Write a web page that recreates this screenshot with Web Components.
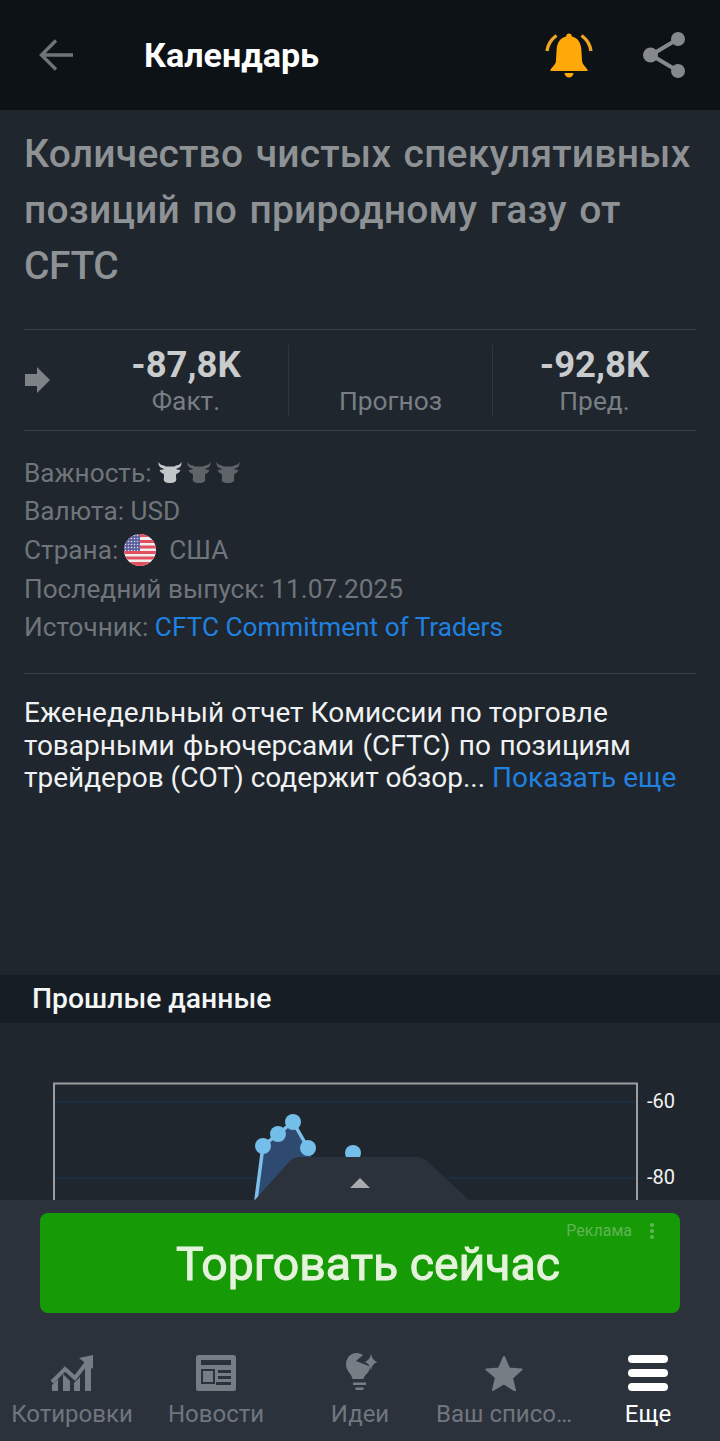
<!DOCTYPE html>
<html lang="ru">
<head>
<meta charset="utf-8">
<title>Календарь</title>
<style>
  html, body { margin: 0; padding: 0; background: #1f262d; }
  body { font-family: Roboto, "Liberation Sans", sans-serif; width: 720px; height: 1441px; overflow: hidden; }
</style>
</head>
<body>
<app-shell>
  <top-bar title="Календарь"></top-bar>
  <event-summary></event-summary>
  <event-stats></event-stats>
  <event-details></event-details>
  <event-about></event-about>
  <section-head>Прошлые данные</section-head>
  <history-chart></history-chart>
  <bottom-dock slot="dock"></bottom-dock>
</app-shell>

<script>
// small helper so each component stays short
function shadow(el, html) {
  el.attachShadow({ mode: 'open' }).innerHTML = html;
}

class AppShell extends HTMLElement {
  constructor() {
    super();
    shadow(this, `
      <style>
        :host { display: flex; flex-direction: column; height: 1441px; position: relative; }
        .scroll { height: 1200px; overflow: hidden; flex: none; }
      </style>
      <div class="scroll"><slot></slot></div>
      <slot name="dock"></slot>
    `);
  }
}

class TopBar extends HTMLElement {
  constructor() {
    super();
    shadow(this, `
      <style>
        :host { display: flex; align-items: center; height: 110px; background: #0d1216; }
        .back { width: 144px; padding-left: 38px; box-sizing: border-box; display: flex; }
        h1 { flex: 1; margin: 0; font: 700 34.100px/40px Roboto, sans-serif; color: #fff; }
        .bell { display: flex; margin-right: 50px; }
        .share { display: flex; margin-right: 33px; }
      </style>
      <div class="back">
        <svg width="36" height="36" viewBox="0 0 36 36" fill="none" stroke="#6f7478" stroke-width="3.400">
          <path d="M35 18H5M18 3.500 3.500 18 18 32.500"/>
        </svg>
      </div>
      <h1>${this.getAttribute('title')}</h1>
      <div class="bell">
        <svg width="48" height="48" viewBox="0 0 48 48">
          <path fill="#ffa80a" d="M24 2.500c1.700 0 2.800 1.200 2.900 3 6.300 1.500 9.100 6.600 9.500 13.500l.7 11.500c.2 2.500 3 4.600 5.300 8 .6.900.2 1.500-.8 1.500H6.400c-1 0-1.400-.6-.8-1.500 2.300-3.400 5.100-5.500 5.300-8l.7-11.500c.4-6.900 3.200-12 9.500-13.500.1-1.800 1.200-3 2.900-3z"/>
          <path fill="#ffa80a" d="M19.500 42h9c-.3 2.800-2.100 4.500-4.500 4.500s-4.200-1.700-4.500-4.500z"/>
          <path fill="none" stroke="#f0a526" stroke-width="3.400" d="M11.500 4.500C6 8.500 2.800 14 2 20M36.500 4.500C42 8.500 45.200 14 46 20"/>
        </svg>
      </div>
      <div class="share">
        <svg width="44" height="48" viewBox="0 0 44 48">
          <path fill="none" stroke="#85898d" stroke-width="4" d="M35 8 8 24l27 16"/>
          <circle cx="35" cy="8" r="7" fill="#85898d"/>
          <circle cx="7.500" cy="24" r="7.500" fill="#85898d"/>
          <circle cx="35" cy="40" r="7" fill="#85898d"/>
        </svg>
      </div>
    `);
  }
}

class EventSummary extends HTMLElement {
  constructor() {
    super();
    shadow(this, `
      <style>
        :host { display: block; padding: 16px 24px 35px; }
        h2 { margin: 0; font: 500 39px/56px Roboto, sans-serif; color: #8e9295; white-space: nowrap; letter-spacing: .19px; word-spacing: 2.500px; }
        span { letter-spacing: -.4px; }
      </style>
      <h2>Количество чистых спекулятивных<br>позиций по природному газу от<br><span>CFTC</span></h2>
    `);
  }
}

class StatCell extends HTMLElement {
  constructor() {
    super();
    shadow(this, `
      <style>
        :host { display: flex; flex-direction: column; align-items: center; justify-content: flex-end; box-sizing: border-box; height: 71px; }
        b { font: 700 36.500px/38px Roboto, sans-serif; color: #c9cbcd; }
        span { font: 400 26.300px/32px Roboto, sans-serif; color: #787e84; position: relative; top: 1px; }
      </style>
      <b>${this.getAttribute('value') || ''}</b>
      <span>${this.getAttribute('label')}</span>
    `);
  }
}

class EventStats extends HTMLElement {
  constructor() {
    super();
    shadow(this, `
      <style>
        :host { display: grid; grid-template-columns: 265px 204px 203px; align-items: center; margin: 0 24px; height: 102px; box-sizing: border-box; border-top: 1px solid #3b4248; border-bottom: 1px solid #3b4248; }
        .first { display: grid; grid-template-columns: 60px 1fr; align-items: center; border-right: 1px solid #2f363d; }
        .first svg { display: block; }
        .mid { border-right: 1px solid #2f363d; }
      </style>
      <div class="first">
        <svg width="28" height="30" viewBox="0 0 28 28"><path fill="#7e8388" d="M1 8h12V1l13 13-13 13v-7H1z"/></svg>
        <stat-cell value="-87,8K" label="Факт."></stat-cell>
      </div>
      <stat-cell class="mid" label="Прогноз"></stat-cell>
      <stat-cell value="-92,8K" label="Пред."></stat-cell>
    `);
  }
}

class BullIcon extends HTMLElement {
  constructor() {
    super();
    const fill = this.hasAttribute('on') ? '#c4c7ca' : '#5f6468';
    shadow(this, `
      <style>:host { display: inline-flex; }</style>
      <svg width="24" height="21" viewBox="0 0 24 21" fill="${fill}">
        <path d="M.5 0c-.5 3 1 5.500 4 6.300l2.500.7h10l2.500-.7c3-.8 4.500-3.300 4-6.300-1 2-2.500 3-4.500 3.300-1 .2-2 .7-2.700 1.200H7.700C7 4 6 3.500 5 3.300 3 3 1.500 2 .5 0z"/>
        <path d="M1.500 8c1.500-.5 3.500-.7 5-.5l.5 4.500c-2.500 0-4.500-1.500-5.500-4zM22.500 8c-1.500-.5-3.500-.7-5-.5l-.5 4.500c2.500 0 4.500-1.500 5.500-4z"/>
        <path d="M5.500 5.500h13L18 15l.3 2.500c0 2-2 3.500-6.300 3.500s-6.300-1.500-6.300-3.500L6 15z"/>
      </svg>
    `);
  }
}

class FlagUs extends HTMLElement {
  constructor() {
    super();
    shadow(this, `
      <style>:host { display: inline-flex; }</style>
      <svg width="32" height="32" viewBox="0 0 32 32">
        <defs><clipPath id="c"><circle cx="16" cy="16" r="16"/></clipPath>
        <pattern id="d" width="3" height="3" patternUnits="userSpaceOnUse"><rect width="3" height="3" fill="#5a5f9c"/><circle cx="1.500" cy="1.500" r=".8" fill="#d5d8ea"/></pattern></defs>
        <g clip-path="url(#c)">
          <rect width="32" height="32" fill="#f1eef0"/>
          <path fill="#e0505f" d="M0 0h32v3H0zM0 6h32v3H0zM0 11.500h32v3H0zM0 17h32v3H0zM0 22.500h32v3H0zM0 28h32v4H0z"/>
          <rect width="16" height="17" fill="url(#d)"/>
        </g>
      </svg>
    `);
  }
}

class EventDetails extends HTMLElement {
  constructor() {
    super();
    shadow(this, `
      <style>
        :host { display: block; margin: 0 24px; padding: 22.500px 0 26.500px; border-bottom: 1px solid #3b4248; font: 400 26.200px/38.700px Roboto, sans-serif; color: #6f757b; }
        div { display: flex; align-items: center; height: 38.700px; white-space: pre; }
        a { color: #1f81e0; text-decoration: none; }
        bull-icon { margin-right: 5px; }
        bull-icon:first-of-type { margin-left: 6px; }
        flag-us { margin: 0 13px 0 6px; }
      </style>
      <div>Важность:<bull-icon on></bull-icon><bull-icon></bull-icon><bull-icon></bull-icon></div>
      <div>Валюта: USD</div>
      <div>Страна:<flag-us></flag-us>США</div>
      <div>Последний выпуск: 11.07.2025</div>
      <div>Источник: <a href="#">CFTC Commitment of Traders</a></div>
    `);
  }
}

class EventAbout extends HTMLElement {
  constructor() {
    super();
    shadow(this, `
      <style>
        :host { display: block; box-sizing: border-box; height: 301px; padding: 23px 24px 0; font: 400 28px/32.500px Roboto, sans-serif; color: #f0f1f2; white-space: nowrap; }
        a { color: #1f81e0; text-decoration: none; }
        .wide { word-spacing: 1.500px; }
      </style>
      Еженедельный отчет Комиссии по торговле<br>
      <span class="wide">товарными фьючерсами (CFTC) по позициям</span><br>
      трейдеров (COT) содержит обзор... <a href="#">Показать еще</a>
    `);
  }
}

class SectionHead extends HTMLElement {
  constructor() {
    super();
    shadow(this, `
      <style>
        :host { display: flex; align-items: center; height: 48px; padding-left: 32px; background: #161d24; font: 500 28.300px/32px Roboto, sans-serif; color: #f4f5f5; }
      </style>
      <slot></slot>
    `);
  }
}

class HistoryChart extends HTMLElement {
  constructor() {
    super();
    shadow(this, `
      <style>
        :host { display: block; height: 180px; }
        svg { display: block; }
        text { font: 400 20px Roboto, sans-serif; fill: #f2f2f2; }
      </style>
      <svg width="720" height="180" viewBox="0 1023 720 180">
        <path fill="none" stroke="#9b9e9f" stroke-width="2" d="M54 1203V1083.500h583V1203"/>
        <path stroke="#1b3347" stroke-width="1.500" d="M55 1102h581M55 1178h581"/>
        <text x="647" y="1108">-60</text>
        <text x="647" y="1184">-80</text>
        <path fill="#2f4a70" d="M256 1200 263 1146l15-12 15-12 15 26 20 52z"/>
        <path fill="none" stroke="#7cc0e9" stroke-width="3.500" d="M256 1200 263 1146l15-12 15-12 15 26"/>
        <g fill="#74bfe9">
          <circle cx="263" cy="1146" r="8"/>
          <circle cx="278" cy="1134" r="8"/>
          <circle cx="293" cy="1122" r="8"/>
          <circle cx="308" cy="1148" r="8"/>
          <circle cx="353" cy="1153" r="8"/>
        </g>
      </svg>
    `);
  }
}

class DockTab extends HTMLElement {
  constructor() {
    super();
    const on = this.hasAttribute('active');
    shadow(this, `
      <style>
        :host { display: flex; flex-direction: column; align-items: center; width: 144px; color: ${on ? '#fff' : '#6f767e'}; }
        .icon { height: 38px; display: flex; align-items: flex-end; justify-content: center; }
        span { margin-top: 7px; font: 400 24px/32px Roboto, sans-serif; white-space: nowrap; }
      </style>
      <div class="icon"><slot></slot></div>
      <span>${this.getAttribute('label')}</span>
    `);
  }
}

class AdBanner extends HTMLElement {
  constructor() {
    super();
    shadow(this, `
      <style>
        :host { display: flex; align-items: center; justify-content: center; position: relative; height: 100px; margin: 0 40px; border-radius: 8px; background: #169a06; }
        b { font: 400 46.400px/52px Roboto, sans-serif; color: #e5f3dc; filter: blur(.6px); -webkit-text-stroke: 1px #e5f3dc; padding: 2px 0 0 16px; }
        .tag { position: absolute; top: 8px; right: 48px; font: 400 16px/20px Roboto, sans-serif; color: #5fb454; }
        svg { position: absolute; top: 9px; right: 24px; }
      </style>
      <b>Торговать сейчас</b>
      <span class="tag">Реклама</span>
      <svg width="8" height="18" viewBox="0 0 8 18"><g fill="#62b557"><circle cx="4" cy="3" r="2"/><circle cx="4" cy="9" r="2"/><circle cx="4" cy="15" r="2"/></g></svg>
    `);
  }
}

class BottomDock extends HTMLElement {
  constructor() {
    super();
    shadow(this, `
      <style>
        :host { display: block; position: relative; height: 241px; box-sizing: border-box; padding-top: 13px; background: #2b323c; }
        .handle { position: absolute; left: 254px; top: -43px; }
        nav { display: flex; margin-top: 40px; }
      </style>
      <svg class="handle" width="216" height="44" viewBox="0 0 216 44">
        <path fill="#2b323c" d="M0 44 34 6c3-4 7-6 12-6h116c5 0 8 1 11 4l43 40z"/>
        <path fill="#a9acaf" d="M106 21l10 10H96z"/>
      </svg>
      <ad-banner></ad-banner>
      <nav>
        <dock-tab label="Котировки">
          <svg width="44" height="36" viewBox="0 0 44 36" fill="#777d85">
            <path d="M2 36v-6l6-6v12zM13 36V19l7 7v10zM24 36v-8l6-6v14zM35 36V12l6-6v30z"/>
            <path fill="none" stroke="#777d85" stroke-width="4" d="M2 27 15 14l10 9L38 6"/>
            <path d="M29 3 43 0v14z"/>
          </svg>
        </dock-tab>
        <dock-tab label="Новости">
          <svg width="40" height="36" viewBox="0 0 40 36">
            <rect width="40" height="36" rx="2.500" fill="#777d85"/>
            <path fill="#2b323c" d="M5 5h30v5H5zM5 14h14v15H5zM22 15h13v3H22zM22 21h13v3H22zM20 27h15v3H20z"/>
            <path fill="#777d85" d="M7 16h10v11H7z"/>
          </svg>
        </dock-tab>
        <dock-tab label="Идеи">
          <svg width="42" height="38" viewBox="0 0 42 38" fill="#777d85">
            <path d="M24 2C21.500.5 19 0 17.500 0 11 0 7 5.500 7 11.500c0 4.500 2.500 7 4.500 10 1 1.500 1.700 3 2 4.500h11c.5-2 1.500-3.500 3-5 2-2 3.500-4.500 3.500-7.500l-14-5.500z"/>
            <path d="M14 29.500h13V32H14zM16.500 34.500h8V37h-8z"/>
            <path d="M32 .5c.8 4.500 2.500 7 6.500 8.500-4 1.500-5.700 4-6.500 8.500-.8-4.500-2.500-7-6.500-8.500 4-1.500 5.700-4 6.500-8.500z"/>
          </svg>
        </dock-tab>
        <dock-tab label="Ваш списо…">
          <svg width="38" height="36" viewBox="0 0 38 36" fill="#777d85">
            <path stroke="#777d85" stroke-width="2" stroke-linejoin="round" d="M19 2l5 11.500 12.500 1-9.500 8.500 3 12.500L19 28.500 8 35l3-12.500L1.500 14.500 14 13.500z"/>
          </svg>
        </dock-tab>
        <dock-tab label="Еще" active>
          <svg width="40" height="36" viewBox="0 0 40 36" fill="#fff">
            <rect width="40" height="8" rx="4"/>
            <rect y="14" width="40" height="8" rx="4"/>
            <rect y="28" width="40" height="8" rx="4"/>
          </svg>
        </dock-tab>
      </nav>
    `);
  }
}

customElements.define('app-shell', AppShell);
customElements.define('top-bar', TopBar);
customElements.define('event-summary', EventSummary);
customElements.define('stat-cell', StatCell);
customElements.define('event-stats', EventStats);
customElements.define('bull-icon', BullIcon);
customElements.define('flag-us', FlagUs);
customElements.define('event-details', EventDetails);
customElements.define('event-about', EventAbout);
customElements.define('section-head', SectionHead);
customElements.define('history-chart', HistoryChart);
customElements.define('dock-tab', DockTab);
customElements.define('ad-banner', AdBanner);
customElements.define('bottom-dock', BottomDock);
</script>
</body>
</html>
